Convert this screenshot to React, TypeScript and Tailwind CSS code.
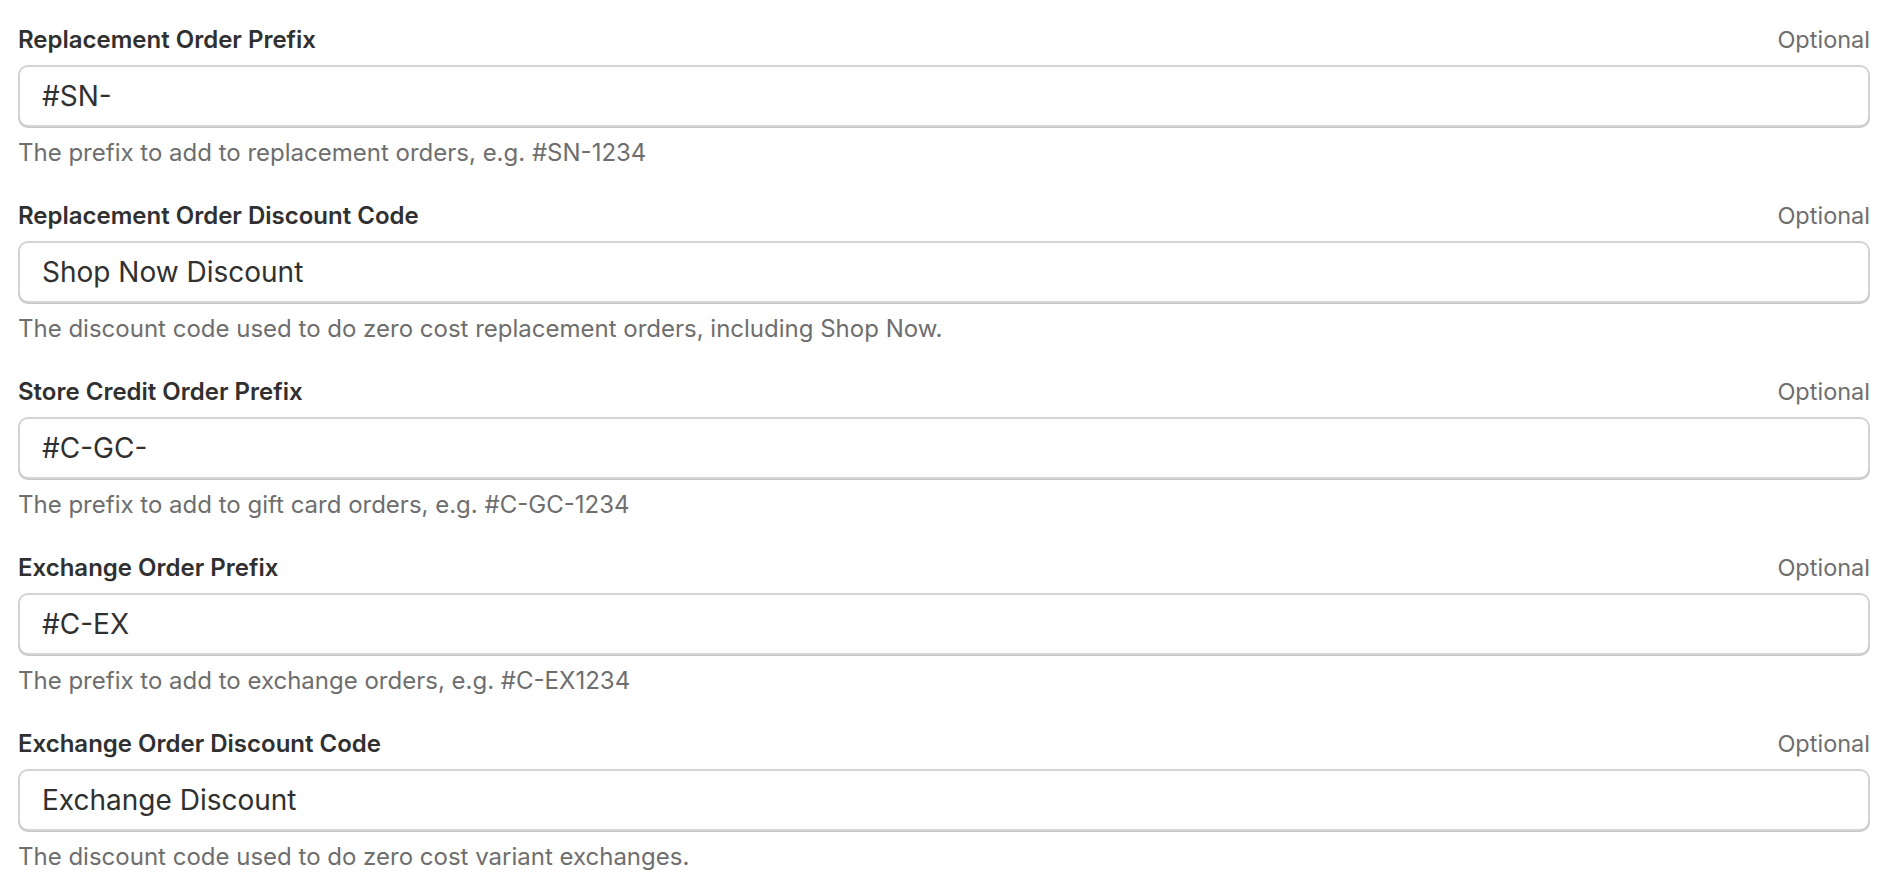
import React from 'react'

type Field = {
  label: string
  value: string
  help: string
}

const fields: Field[] = [
  { label: 'Replacement Order Prefix', value: '#SN-', help: 'The prefix to add to replacement orders, e.g. #SN-1234' },
  { label: 'Replacement Order Discount Code', value: 'Shop Now Discount', help: 'The discount code used to do zero cost replacement orders, including Shop Now.' },
  { label: 'Store Credit Order Prefix', value: '#C-GC-', help: 'The prefix to add to gift card orders, e.g. #C-GC-1234' },
  { label: 'Exchange Order Prefix', value: '#C-EX', help: 'The prefix to add to exchange orders, e.g. #C-EX1234' },
  { label: 'Exchange Order Discount Code', value: 'Exchange Discount', help: 'The discount code used to do zero cost variant exchanges.' },
]

const FieldRow = ({ field }: { field: Field }) => (
  <div className="flex flex-col">
    <div className="flex items-center justify-between h-[29px] pt-[1px]">
      <label className="text-[24px] leading-[28px] font-semibold text-[#303030]">{field.label}</label>
      <span className="text-[23.5px] leading-[28px] text-[#6e6e6e]">Optional</span>
    </div>
    <input
      defaultValue={field.value}
      className="mt-[11px] h-[62px] w-full rounded-[10px] border-2 border-[#d4d4d4] bg-white px-[22px] text-[28px] text-[#303030] shadow-[0_1px_0_#c8c8c8] outline-none"
    />
    <p className="mt-[12px] h-[27px] leading-[28px] text-[24px] text-[#6e6e6e]">{field.help}</p>
  </div>
)

export default function App() {
  return (
    <div className="min-h-screen bg-white pt-[25px] pl-[18px] pr-[22px] font-['Inter',sans-serif]">
      <div className="flex flex-col gap-[35px]">
        {fields.map((f) => (
          <FieldRow key={f.label} field={f} />
        ))}
      </div>
    </div>
  )
}
